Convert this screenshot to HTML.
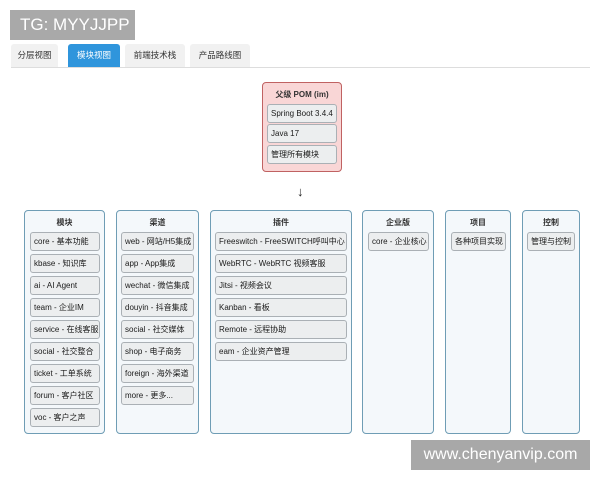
<!DOCTYPE html>
<html><head><meta charset="utf-8"><style>
*{box-sizing:border-box;margin:0;padding:0}
body{width:600px;height:480px;background:#fff;position:relative;overflow:hidden;font-family:"Liberation Sans","Noto Sans CJK SC",sans-serif;color:#222}
.abs{position:absolute}
.tg{left:10px;top:10px;width:125px;height:30px;background:#a9a9a9;color:#fff;font-size:17px;line-height:30px;padding-left:10px}
.tab{top:44px;height:23px;background:#f1f1f1;font-size:8.5px;line-height:23px;text-align:center;border-radius:3px 3px 0 0;color:#333}
.tab.on{background:#2f95dc;color:#fff}
.line{left:11px;top:67px;width:579px;height:1px;background:#ddd}
.pom{left:262px;top:82px;width:80px;height:90px;background:#f9d6d6;border:1.5px solid #c06262;border-radius:4px}
.col{top:210px;height:224px;background:#f4f8fb;border:1.5px solid #6f9db5;border-radius:4px}
.h{position:absolute;left:0;right:0;text-align:center;font-size:8px;font-weight:bold;color:#333}
.it{position:absolute;height:19px;background:#eceeef;border:1px solid #aab0b5;border-radius:3px;font-size:8px;line-height:17px;padding-left:3px;white-space:nowrap;color:#1a1a1a;overflow:hidden}
.wm{left:411px;top:440px;width:179px;height:30px;background:#a8a8a8;color:#fff;font-size:16px;line-height:30px;text-align:center}
</style></head><body>
<div class="abs tg">TG: MYYJJPP</div>
<div class="abs tab" style="left:11px;width:47px">分层视图</div>
<div class="abs tab on" style="left:68px;width:52px">模块视图</div>
<div class="abs tab" style="left:125px;width:60px">前端技术栈</div>
<div class="abs tab" style="left:190px;width:60px">产品路线图</div>
<div class="abs line"></div>

<div class="abs pom">
<div class="h" style="top:6px">父级 POM (im)</div>
<div class="it" style="left:4px;width:70px;top:21px">Spring Boot 3.4.4</div>
<div class="it" style="left:4px;width:70px;top:41px">Java 17</div>
<div class="it" style="left:4px;width:70px;top:62px">管理所有模块</div>
</div>
<div class="abs" style="left:297px;top:184px;font-size:13px">↓</div>

<div class="abs col" style="left:24px;width:81px">
<div class="h" style="top:6px">模块</div>
<div class="it" style="left:5px;width:70px;top:21px">core - 基本功能</div>
<div class="it" style="left:5px;width:70px;top:43px">kbase - 知识库</div>
<div class="it" style="left:5px;width:70px;top:65px">ai - AI Agent</div>
<div class="it" style="left:5px;width:70px;top:87px">team - 企业IM</div>
<div class="it" style="left:5px;width:70px;top:109px">service - 在线客服</div>
<div class="it" style="left:5px;width:70px;top:131px">social - 社交整合</div>
<div class="it" style="left:5px;width:70px;top:153px">ticket - 工单系统</div>
<div class="it" style="left:5px;width:70px;top:175px">forum - 客户社区</div>
<div class="it" style="left:5px;width:70px;top:197px">voc - 客户之声</div>
</div>
<div class="abs col" style="left:116px;width:83px">
<div class="h" style="top:6px">渠道</div>
<div class="it" style="left:4px;width:73px;top:21px">web - 网站/H5集成</div>
<div class="it" style="left:4px;width:73px;top:43px">app - App集成</div>
<div class="it" style="left:4px;width:73px;top:65px">wechat - 微信集成</div>
<div class="it" style="left:4px;width:73px;top:87px">douyin - 抖音集成</div>
<div class="it" style="left:4px;width:73px;top:109px">social - 社交媒体</div>
<div class="it" style="left:4px;width:73px;top:131px">shop - 电子商务</div>
<div class="it" style="left:4px;width:73px;top:153px">foreign - 海外渠道</div>
<div class="it" style="left:4px;width:73px;top:175px">more - 更多...</div>
</div>
<div class="abs col" style="left:210px;width:142px">
<div class="h" style="top:6px">插件</div>
<div class="it" style="left:4px;width:132px;top:21px">Freeswitch - FreeSWITCH呼叫中心</div>
<div class="it" style="left:4px;width:132px;top:43px">WebRTC - WebRTC 视频客服</div>
<div class="it" style="left:4px;width:132px;top:65px">Jitsi - 视频会议</div>
<div class="it" style="left:4px;width:132px;top:87px">Kanban - 看板</div>
<div class="it" style="left:4px;width:132px;top:109px">Remote - 远程协助</div>
<div class="it" style="left:4px;width:132px;top:131px">eam - 企业资产管理</div>
</div>
<div class="abs col" style="left:362px;width:72px">
<div class="h" style="top:6px">企业版</div>
<div class="it" style="left:5px;width:61px;top:21px">core - 企业核心</div>
</div>
<div class="abs col" style="left:445px;width:66px">
<div class="h" style="top:6px">项目</div>
<div class="it" style="left:5px;width:55px;top:21px">各种项目实现</div>
</div>
<div class="abs col" style="left:522px;width:58px">
<div class="h" style="top:6px">控制</div>
<div class="it" style="left:4px;width:48px;top:21px">管理与控制</div>
</div>
<div class="abs wm">www.chenyanvip.com</div>
</body></html>
